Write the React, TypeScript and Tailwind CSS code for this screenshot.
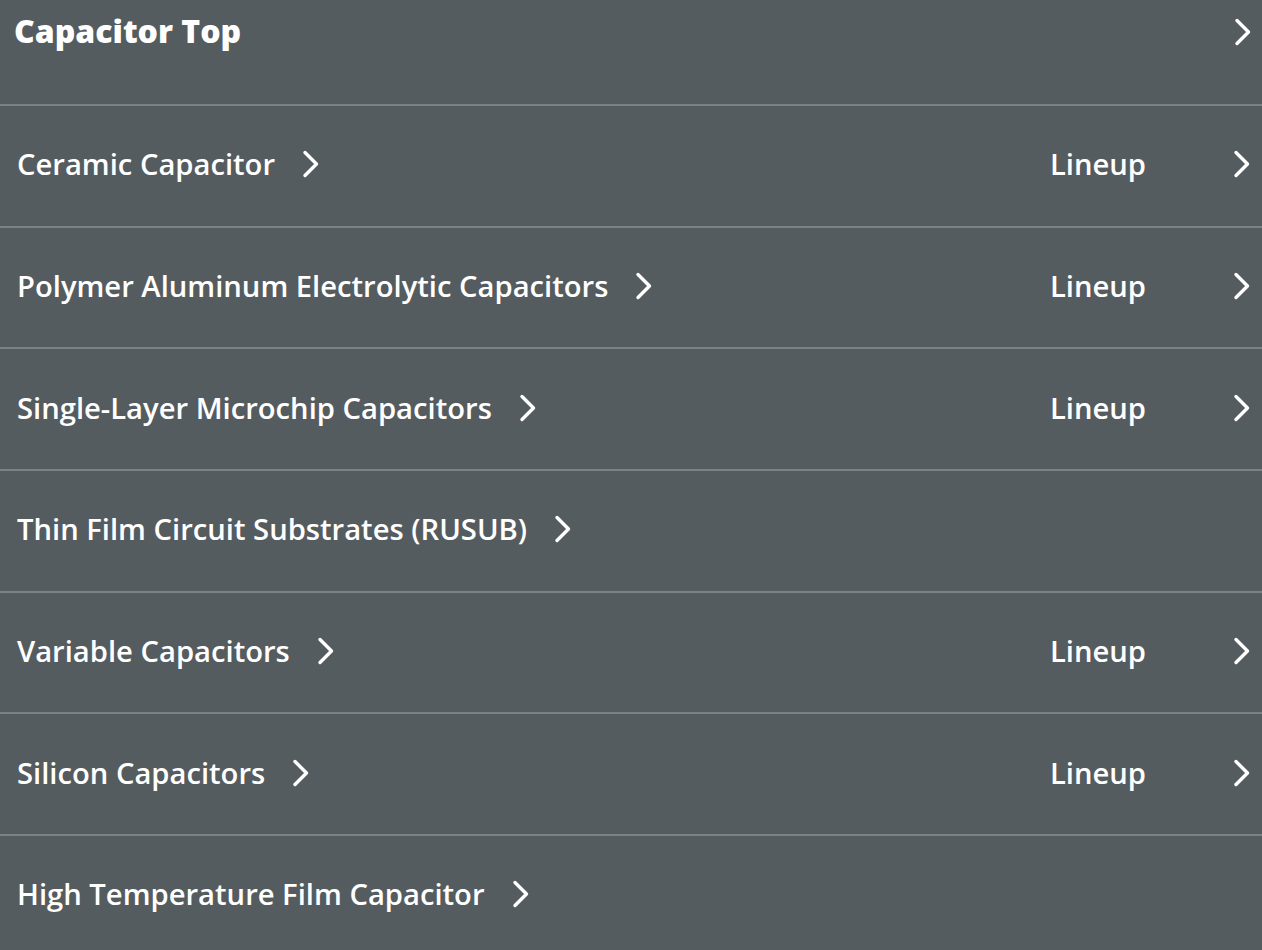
import React from "react";

const rows = [
  { name: "Ceramic Capacitor", lineup: true },
  { name: "Polymer Aluminum Electrolytic Capacitors", lineup: true },
  { name: "Single-Layer Microchip Capacitors", lineup: true },
  { name: "Thin Film Circuit Substrates (RUSUB)", lineup: false },
  { name: "Variable Capacitors", lineup: true },
  { name: "Silicon Capacitors", lineup: true },
  { name: "High Temperature Film Capacitor", lineup: false },
];

const Chevron = ({ className = "" }: { className?: string }) => (
  <svg className={className} width="18" height="28" viewBox="0 0 18 28" fill="none">
    <polyline points="3,2.5 14.5,14 3,25.5" stroke="white" strokeWidth="3.4" strokeLinecap="round" strokeLinejoin="round" />
  </svg>
);

const App = () => {
  return (
    <div className="w-[1262px] h-[950px] overflow-hidden bg-[#555c5f] text-white" style={{ fontFamily: "'Open Sans', 'Noto Sans', sans-serif" }}>
      <div className="h-[106px] border-b-2 border-[#7b8184] flex items-start justify-between pl-[14px] pr-[10px] pt-[10px]">
        <span className="text-[32px] font-extrabold leading-[42px]">Capacitor Top</span>
        <Chevron className="mt-[8px]" />
      </div>
      {rows.map((row) => (
        <div key={row.name} className="h-[121.7px] border-b-2 border-[#7b8184] flex items-center pl-[17px] pr-[11px] pb-[3px]">
          <div className="flex-1 flex items-center">
            <span className="text-[29.2px] font-semibold leading-[38px]">{row.name}</span>
            <Chevron className="ml-[27px]" />
          </div>
          {row.lineup ? (
            <div className="flex items-center">
              <span className="text-[29.2px] font-semibold leading-[38px]">Lineup</span>
              <Chevron className="ml-[87px]" />
            </div>
          ) : null}
        </div>
      ))}
    </div>
  );
};

export default App;
